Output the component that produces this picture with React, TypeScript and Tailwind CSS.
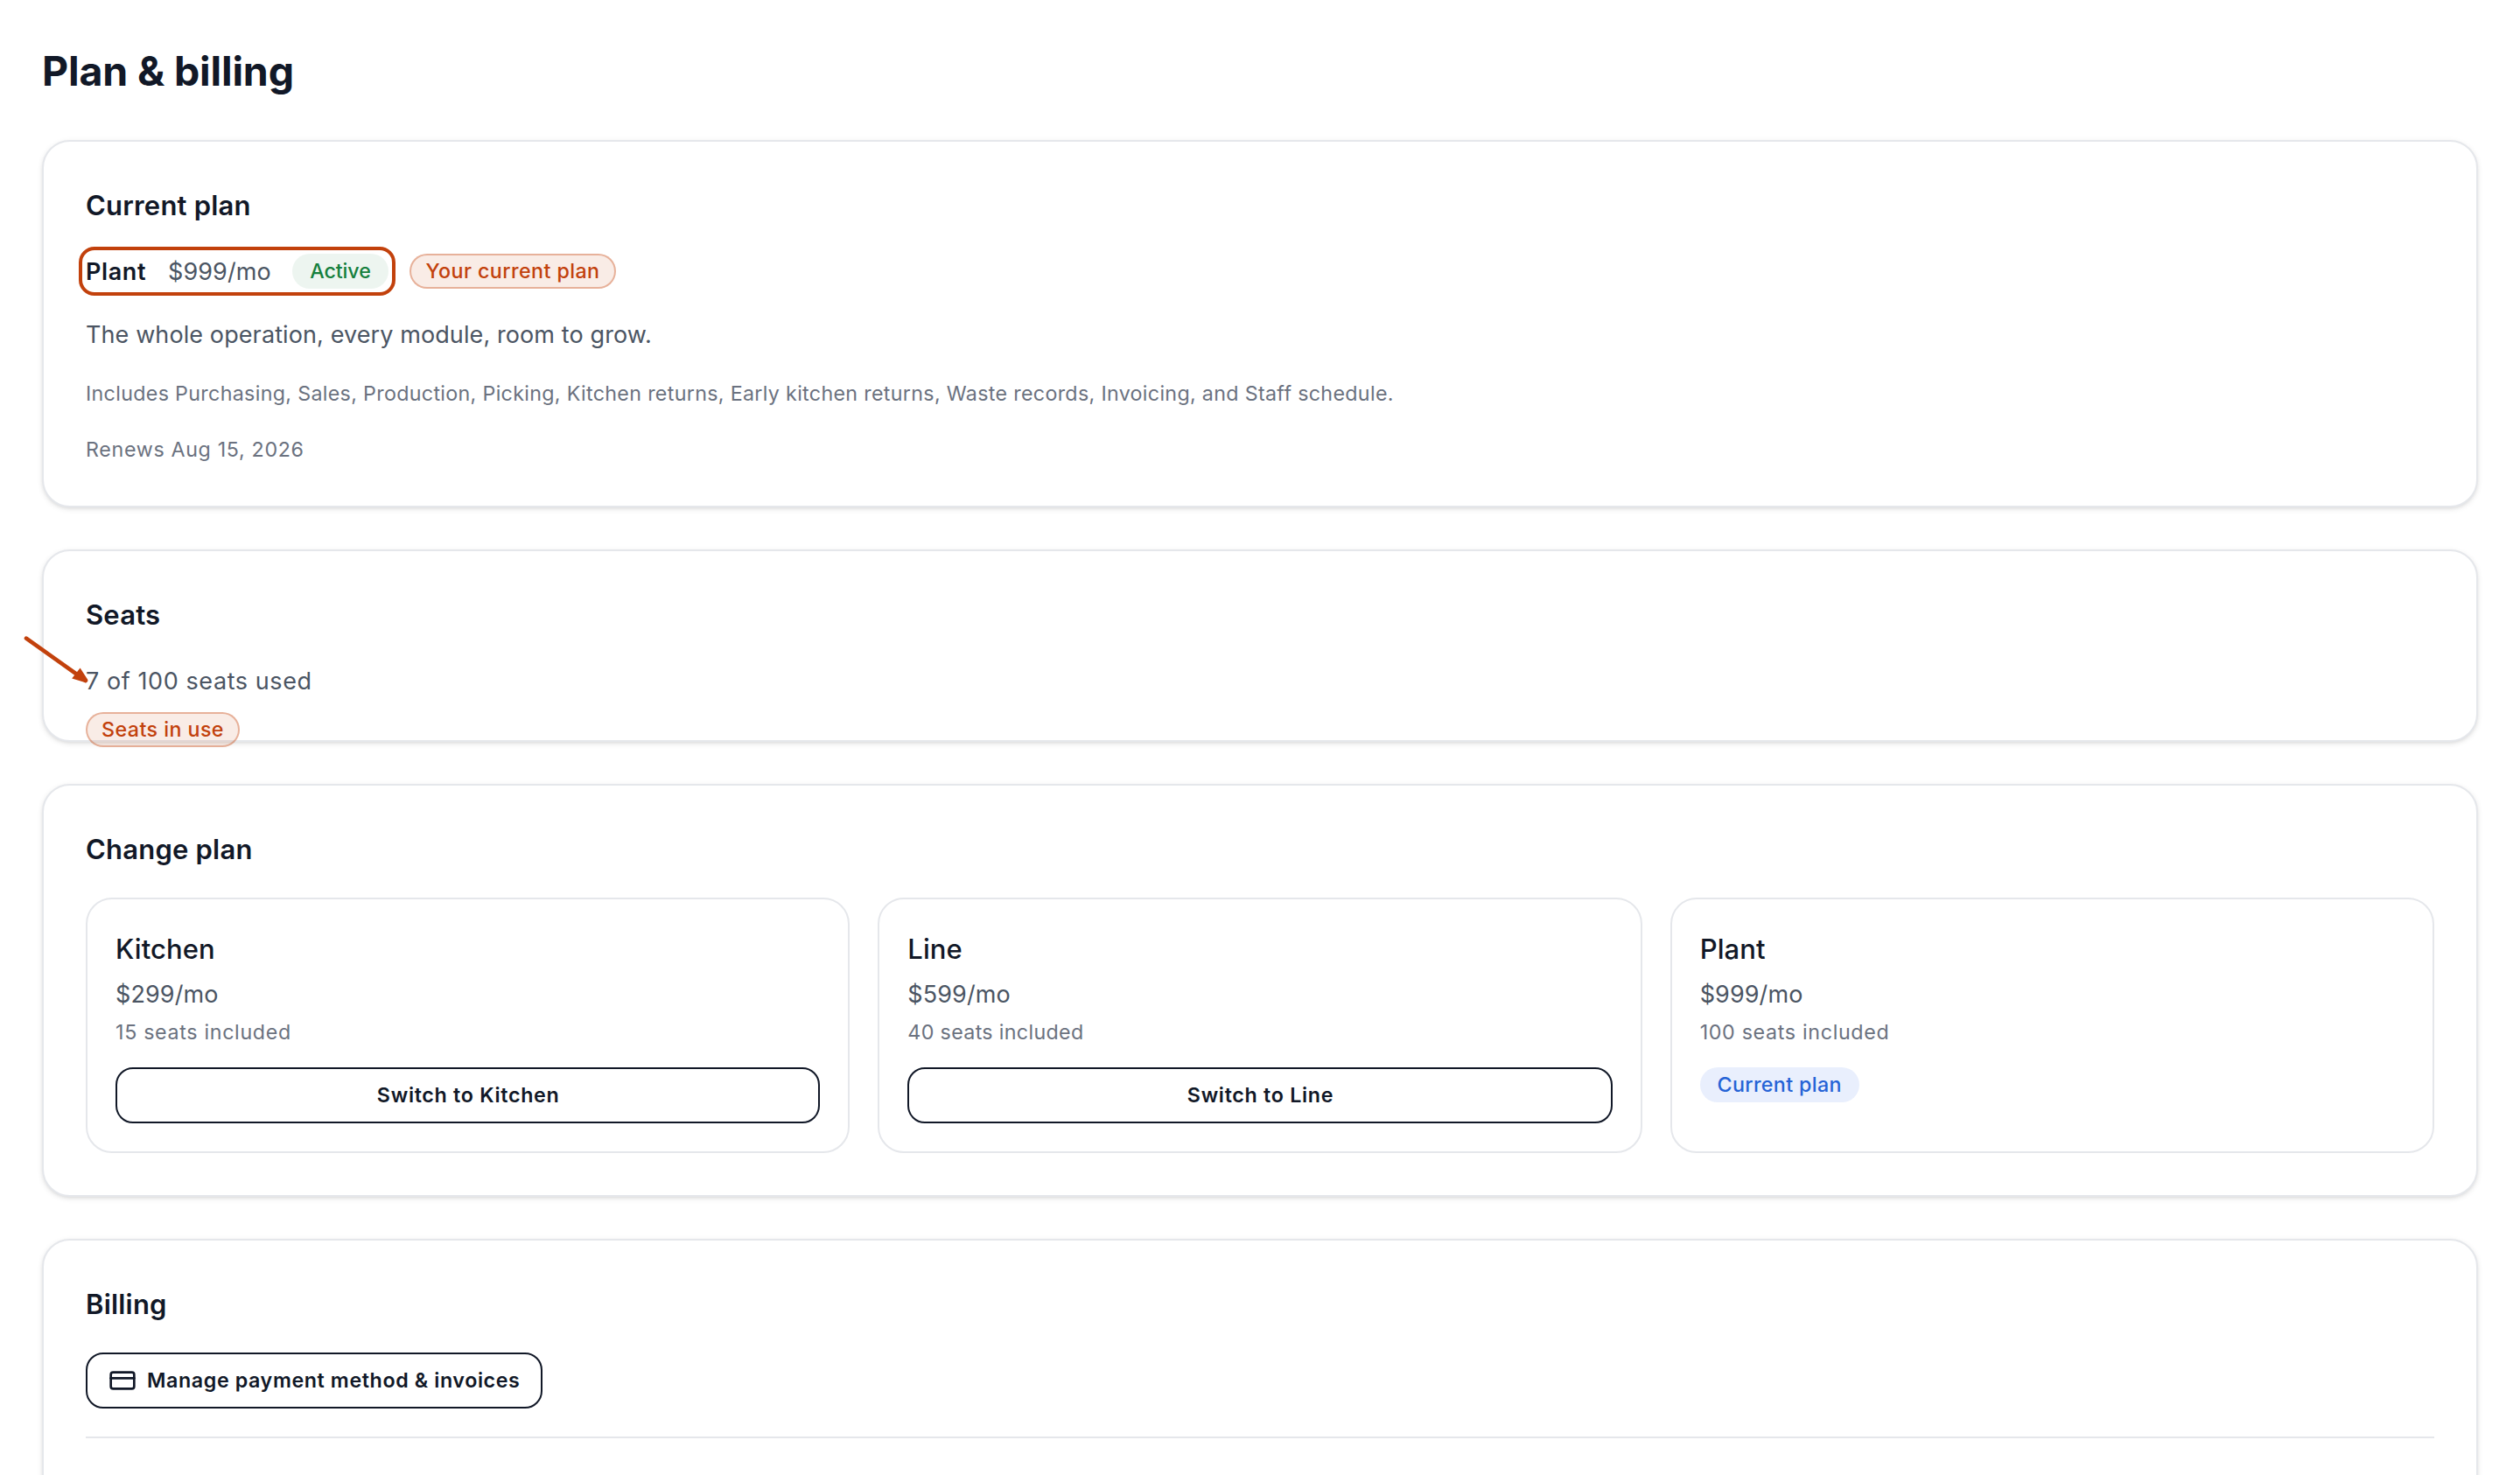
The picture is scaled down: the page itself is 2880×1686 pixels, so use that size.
import type { ReactNode } from 'react'
import { CreditCard } from 'lucide-react'

const plans = [
  { name: 'Kitchen', price: '$299/mo', seats: '15 seats included', seatsTracking: 'tracking-[0.67px]', current: false },
  { name: 'Line', price: '$599/mo', seats: '40 seats included', seatsTracking: 'tracking-[0.33px]', current: false },
  { name: 'Plant', price: '$999/mo', seats: '100 seats included', seatsTracking: 'tracking-[0.67px]', current: true },
]

function Card({ title, className = '', children }: { title: string; className?: string; children: ReactNode }) {
  return (
    <section
      className={`flex flex-col gap-8 rounded-[32px] border-2 border-[#e5e7eb] bg-white p-12 shadow-[0_2px_6px_0_rgba(0,0,0,0.1),0_2px_4px_-2px_rgba(0,0,0,0.1)] ${className}`}
    >
      <h2 className="-mb-px pt-px text-[31px] leading-[48px] font-semibold tracking-[0.2px] text-[#111827]">{title}</h2>
      {children}
    </section>
  )
}

function Callout({ className, children }: { className: string; children: ReactNode }) {
  return (
    <span
      className={`absolute flex h-10 items-center justify-center rounded-full border-2 border-[#c2410c]/35 bg-[#c2410c]/10 text-[23.25px] leading-none font-medium tracking-[0.43px] whitespace-nowrap text-[#c2410c] ${className}`}
    >
      {children}
    </span>
  )
}

function CurrentPlan() {
  return (
    <Card title="Current plan">
      <div className="relative flex h-10 w-fit items-center">
        <span className="w-[93px] pt-0.5 text-[27px] font-semibold tracking-[0.6px] text-[#111827]">Plant</span>
        <span className="w-[143px] pt-0.5 pl-px text-[27px] tracking-[0.1px] text-[#4b5563]">$999/mo</span>
        <span className="flex h-10 w-[110px] items-center justify-center rounded-full bg-[#15803d]/8 text-[23.25px] font-[450] tracking-[-0.1px] text-[#15803d]">
          Active
        </span>

        {/* Highlight around the plan row */}
        <div className="absolute -inset-2 rounded-[18px] border-4 border-[#c2410c]" />
        <Callout className="top-0 left-[370px] w-[236px]">Your current plan</Callout>
      </div>
      <p className="-mb-px pt-px text-[27px] leading-10 tracking-[0.1px] text-[#4b5563]">
        The whole operation, every module, room to grow.
      </p>
      <p className="text-[23.25px] leading-8 tracking-[0.32px] text-[#6b7280]">
        Includes Purchasing, Sales, Production, Picking, Kitchen returns, Early kitchen returns, Waste records,
        Invoicing, and Staff schedule.
      </p>
      <p className="text-[23.25px] leading-8 tracking-[0.66px] text-[#6b7280]">Renews Aug 15, 2026</p>
    </Card>
  )
}

function Seats() {
  return (
    <Card title="Seats">
      <div className="relative">
        <p className="-mb-px pt-px text-[27px] leading-10 tracking-[0.58px] text-[#4b5563]">7 of 100 seats used</p>
        <Callout className="top-14 left-0 w-44">Seats in use</Callout>

        {/* Pointer to the seat count */}
        <svg className="absolute -top-10 -left-20" width="90" height="70" viewBox="0 0 90 70" fill="none">
          <path d="M12 11.7 L80 60" stroke="#c2410c" strokeWidth="4.6" strokeLinecap="round" />
          <path d="M73.6 45.5 L64.2 57.6 L79 62 L82 58.4 Z" fill="#c2410c" />
        </svg>
      </div>
    </Card>
  )
}

function ChangePlan() {
  return (
    <Card title="Change plan">
      <div className="grid grid-cols-3 gap-8">
        {plans.map((plan) => (
          <div key={plan.name} className="flex flex-col items-start rounded-[30px] border-2 border-[#e5e7eb] p-8">
            <h3 className="-mb-px pt-px text-[31px] leading-[48px] font-medium tracking-[0.1px] text-[#111827]">
              {plan.name}
            </h3>
            <p className="mt-2 -mb-px pt-px text-[27px] leading-10 tracking-[0.1px] text-[#4b5563]">{plan.price}</p>
            <p className={`mt-2 text-[23.25px] leading-8 text-[#6b7280] ${plan.seatsTracking}`}>{plan.seats}</p>
            {plan.current ? (
              <span className="mt-6 flex h-10 w-[182px] items-center justify-center rounded-full bg-[#2563eb]/10 text-[23.25px] font-[450] tracking-[0.35px] text-[#2563d6]">
                Current plan
              </span>
            ) : (
              <button className="mt-6 h-16 w-full rounded-[20px] border-2 border-[#111827] pl-px text-[23.25px] font-semibold tracking-[0.7px] text-[#111827]">
                Switch to {plan.name}
              </button>
            )}
          </div>
        ))}
      </div>
    </Card>
  )
}

function Billing() {
  return (
    <Card title="Billing" className="h-[400px] shrink-0">
      <button className="flex h-16 w-[522px] shrink-0 items-center gap-3 self-start rounded-[20px] border-2 border-[#111827] px-6 text-[23.25px] font-semibold tracking-[0.6px] whitespace-nowrap text-[#111827]">
        <CreditCard size={32} strokeWidth={2} className="shrink-0" />
        Manage payment method &amp; invoices
      </button>
      <div className="border-t-2 border-[#e5e7eb]" />
    </Card>
  )
}

export default function App() {
  return (
    <div className="h-[1686px] overflow-hidden bg-white p-12 font-['Inter',sans-serif]">
      <div className="flex flex-col gap-12">
        <h1 className="-mb-px pt-px text-[46.5px] leading-[64px] font-bold tracking-[-0.15px] text-[#111827]">
          Plan &amp; billing
        </h1>
        <CurrentPlan />
        <Seats />
        <ChangePlan />
        <Billing />
      </div>
    </div>
  )
}
